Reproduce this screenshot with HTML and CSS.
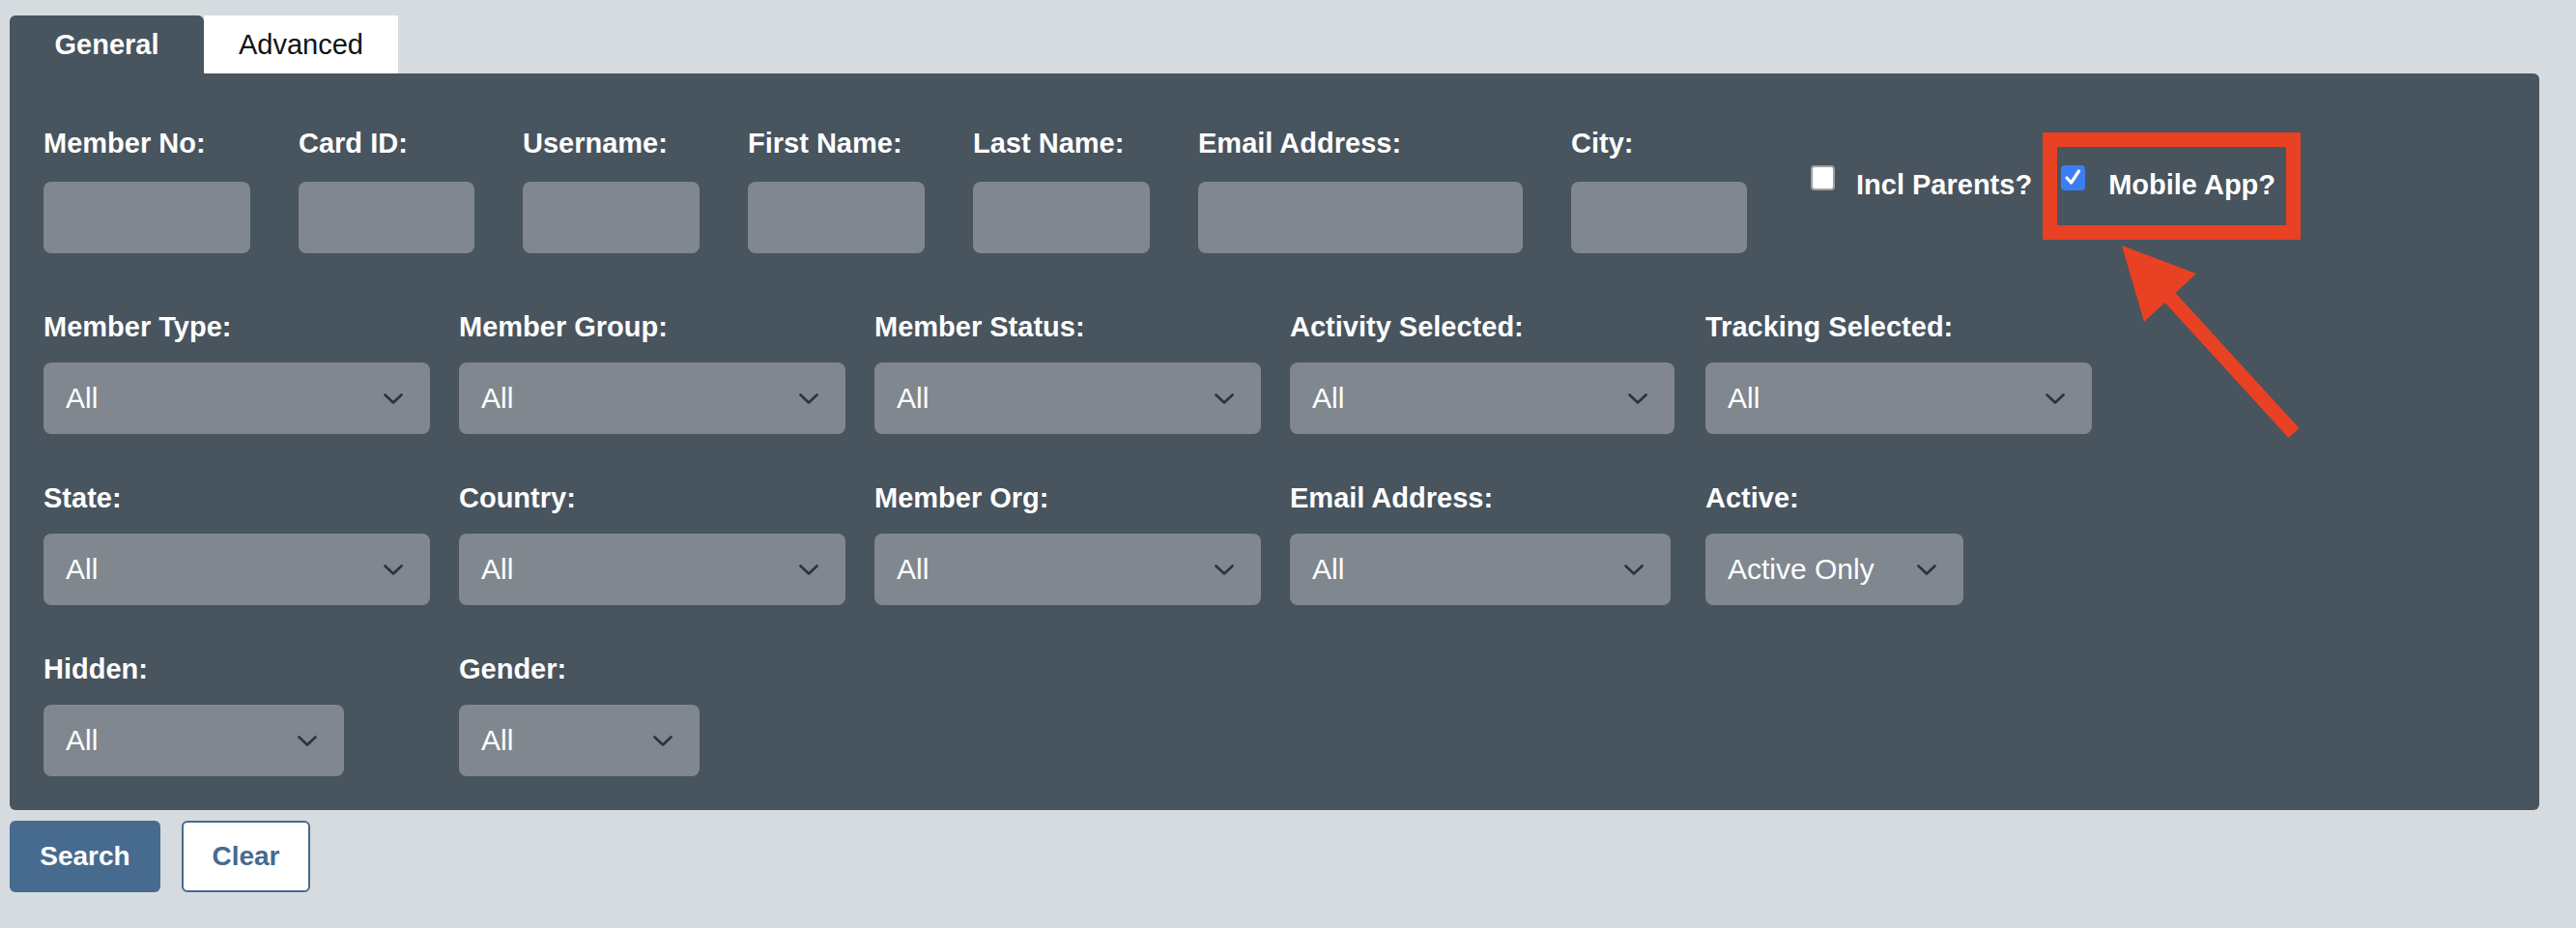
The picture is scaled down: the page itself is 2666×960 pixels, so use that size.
FILE: index.html
```html
<!DOCTYPE html>
<html lang="en">
<head>
<meta charset="utf-8">
<title>Member Search</title>
<link rel="stylesheet" href="styles.css">
</head>
<body>
<div class="page">
  <div class="tabs">
    <div class="tab tab-active">General</div>
    <div class="tab">Advanced</div>
  </div>

  <div class="panel">
    <div class="row-text">
      <div class="field w-214"><div class="label">Member No:</div><div class="input"></div></div>
      <div class="field w-182"><div class="label">Card ID:</div><div class="input"></div></div>
      <div class="field w-183"><div class="label">Username:</div><div class="input"></div></div>
      <div class="field w-183"><div class="label">First Name:</div><div class="input"></div></div>
      <div class="field w-183"><div class="label">Last Name:</div><div class="input"></div></div>
      <div class="field w-336"><div class="label">Email Address:</div><div class="input"></div></div>
      <div class="field w-182"><div class="label">City:</div><div class="input"></div></div>
      <div class="checks">
        <div class="check-item">
          <span class="checkbox"></span>
          <span class="check-label">Incl Parents?</span>
        </div>
        <div class="check-item">
          <span class="checkbox checked">
            <svg viewBox="0 0 25 26" width="25" height="26"><polyline points="6,13 10.5,18 18.5,6" fill="none" stroke="#ffffff" stroke-width="3.2" stroke-linecap="round" stroke-linejoin="round"/></svg>
          </span>
          <span class="check-label">Mobile App?</span>
        </div>
      </div>
    </div>

    <div class="row-select">
      <div class="sfield"><div class="label">Member Type:</div><div class="select s-400"><span class="val">All</span><svg class="chev" viewBox="0 0 20 11"><polyline points="1.5,1.5 10,9.5 18.5,1.5"/></svg></div></div>
      <div class="sfield"><div class="label">Member Group:</div><div class="select s-400"><span class="val">All</span><svg class="chev" viewBox="0 0 20 11"><polyline points="1.5,1.5 10,9.5 18.5,1.5"/></svg></div></div>
      <div class="sfield"><div class="label">Member Status:</div><div class="select s-400"><span class="val">All</span><svg class="chev" viewBox="0 0 20 11"><polyline points="1.5,1.5 10,9.5 18.5,1.5"/></svg></div></div>
      <div class="sfield"><div class="label">Activity Selected:</div><div class="select s-398"><span class="val">All</span><svg class="chev" viewBox="0 0 20 11"><polyline points="1.5,1.5 10,9.5 18.5,1.5"/></svg></div></div>
      <div class="sfield"><div class="label">Tracking Selected:</div><div class="select s-400"><span class="val">All</span><svg class="chev" viewBox="0 0 20 11"><polyline points="1.5,1.5 10,9.5 18.5,1.5"/></svg></div></div>
    </div>

    <div class="row-select">
      <div class="sfield"><div class="label">State:</div><div class="select s-400"><span class="val">All</span><svg class="chev" viewBox="0 0 20 11"><polyline points="1.5,1.5 10,9.5 18.5,1.5"/></svg></div></div>
      <div class="sfield"><div class="label">Country:</div><div class="select s-400"><span class="val">All</span><svg class="chev" viewBox="0 0 20 11"><polyline points="1.5,1.5 10,9.5 18.5,1.5"/></svg></div></div>
      <div class="sfield"><div class="label">Member Org:</div><div class="select s-400"><span class="val">All</span><svg class="chev" viewBox="0 0 20 11"><polyline points="1.5,1.5 10,9.5 18.5,1.5"/></svg></div></div>
      <div class="sfield"><div class="label">Email Address:</div><div class="select s-394"><span class="val">All</span><svg class="chev" viewBox="0 0 20 11"><polyline points="1.5,1.5 10,9.5 18.5,1.5"/></svg></div></div>
      <div class="sfield"><div class="label">Active:</div><div class="select s-267"><span class="val">Active Only</span><svg class="chev" viewBox="0 0 20 11"><polyline points="1.5,1.5 10,9.5 18.5,1.5"/></svg></div></div>
    </div>

    <div class="row-select">
      <div class="sfield"><div class="label">Hidden:</div><div class="select s-311"><span class="val">All</span><svg class="chev" viewBox="0 0 20 11"><polyline points="1.5,1.5 10,9.5 18.5,1.5"/></svg></div></div>
      <div class="sfield"><div class="label">Gender:</div><div class="select s-249"><span class="val">All</span><svg class="chev" viewBox="0 0 20 11"><polyline points="1.5,1.5 10,9.5 18.5,1.5"/></svg></div></div>
    </div>
  </div>

  <div class="actions">
    <button class="btn btn-primary">Search</button>
    <button class="btn btn-outline">Clear</button>
  </div>

  <svg class="annotation" width="2666" height="960" viewBox="0 0 2666 960">
    <rect x="2121.5" y="144.5" width="252" height="96" fill="none" stroke="#e84124" stroke-width="15"/>
    <polygon fill="#e84124" points="2196,254 2273,283 2251.5,302.9 2379.5,442.9 2368.5,453.1 2240.5,313.1 2219,333"/>
  </svg>
</div>
</body>
</html>
```

FILE: styles.css
```css
* { box-sizing: border-box; }

html, body {
  margin: 0;
  padding: 0;
  background: #d6dbdf;
}

body {
  font-family: "Liberation Sans", Arial, sans-serif;
  color: #ffffff;
}

.page {
  position: relative;
  width: 2666px;
  height: 960px;
  padding: 16px 38px 0 10px;
}

/* Tabs */
.tabs {
  display: flex;
  height: 60px;
}

.tab {
  width: 201px;
  height: 60px;
  display: flex;
  align-items: center;
  justify-content: center;
  font-size: 29px;
  color: #111111;
  background: #ffffff;
}

.tab-active {
  background: #48545e;
  color: #ffffff;
  font-weight: 700;
  border-radius: 6px 6px 0 0;
}

/* Panel */
.panel {
  background: #48545e;
  border-radius: 0 6px 6px 6px;
  padding: 54px 35px 35px 35px;
}

.label {
  font-size: 29px;
  font-weight: 700;
  line-height: 36px;
  color: #ffffff;
  white-space: nowrap;
}

.row-text {
  display: flex;
  gap: 50px;
  margin-bottom: 58px;
}

.field .label { margin-bottom: 22px; }

.w-182 { width: 182px; }
.w-183 { width: 183px; }
.w-214 { width: 214px; }
.w-336 { width: 336px; }

.input {
  height: 74px;
  background: #80878f;
  border-radius: 8px;
}

/* Checkboxes */
.checks {
  display: flex;
  margin-left: 16px;
  margin-top: 43px;
  gap: 30px;
  align-self: flex-start;
}

.check-item {
  display: flex;
  align-items: flex-start;
  gap: 22px;
}

.check-item + .check-item { gap: 24px; }

.checkbox {
  width: 25px;
  height: 26px;
  margin-top: -2px;
  background: #ffffff;
  border: 2px solid #9aa0a6;
  border-radius: 4px;
  display: block;
  flex: none;
}

.checkbox.checked {
  background: #3b7ef3;
  border: none;
  border-radius: 4px;
}

.checkbox svg { display: block; }

.check-label {
  font-size: 29px;
  font-weight: 700;
  line-height: 36px;
  white-space: nowrap;
}

/* Select rows */
.row-select {
  display: grid;
  grid-template-columns: repeat(5, 400px);
  column-gap: 30px;
  margin-bottom: 48px;
}

.row-select:last-child { margin-bottom: 0; }

.sfield .label { margin-bottom: 19px; }

.select {
  height: 74px;
  background: #80878f;
  border-radius: 8px;
  display: flex;
  align-items: center;
  justify-content: space-between;
  padding: 0 28px 0 23px;
}

.s-400 { width: 400px; }
.s-398 { width: 398px; }
.s-394 { width: 394px; }
.s-311 { width: 311px; }
.s-267 { width: 267px; }
.s-249 { width: 249px; }

.val {
  font-size: 30px;
  color: #ffffff;
  white-space: nowrap;
}

.chev {
  width: 20px;
  height: 11px;
  flex: none;
}

.chev polyline {
  fill: none;
  stroke: #2b333b;
  stroke-width: 2.6;
  stroke-linecap: round;
  stroke-linejoin: round;
}

/* Actions */
.actions {
  display: flex;
  gap: 22px;
  margin-top: 11px;
}

.btn {
  height: 74px;
  border-radius: 6px;
  font-family: "Liberation Sans", Arial, sans-serif;
  font-size: 28px;
  font-weight: 700;
  cursor: pointer;
}

.btn-primary {
  width: 156px;
  background: #466b8f;
  color: #ffffff;
  border: none;
}

.btn-outline {
  width: 133px;
  background: #ffffff;
  color: #466b8f;
  border: 2px solid #466b8f;
}

/* Annotation overlay */
.annotation {
  position: absolute;
  left: 0;
  top: 0;
  pointer-events: none;
}
```
